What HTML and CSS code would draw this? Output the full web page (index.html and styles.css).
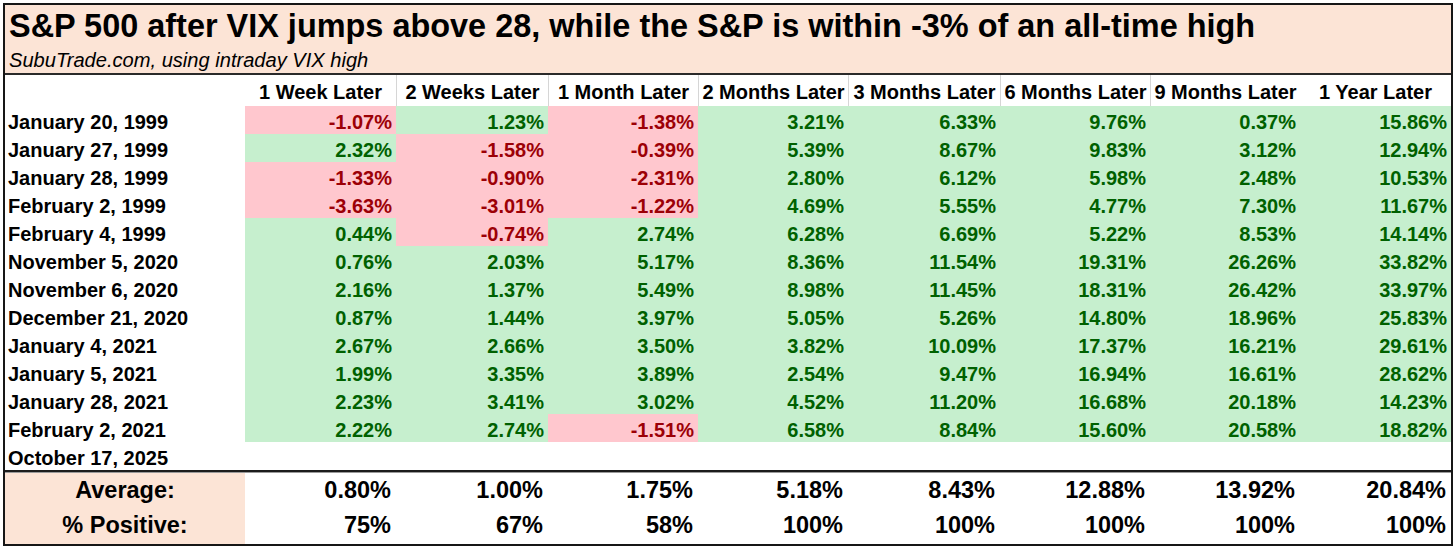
FILE: index.html
```html
<!DOCTYPE html>
<html lang="en">
<head>
<meta charset="utf-8">
<title>S&amp;P 500 after VIX jumps above 28</title>
<link rel="stylesheet" href="styles.css">
</head>
<body>
<div class="sheet">
  <div class="band">
    <div class="title">S&amp;P 500 after VIX jumps above 28, while the S&amp;P is within -3% of an all-time high</div>
    <div class="subtitle">SubuTrade.com, using intraday VIX high</div>
  </div>
  <div class="grid">
    <div class="hd"></div>
    <div class="hd">1 Week Later</div>
    <div class="hd sep">2 Weeks Later</div>
    <div class="hd sep">1 Month Later</div>
    <div class="hd sep">2 Months Later</div>
    <div class="hd sep">3 Months Later</div>
    <div class="hd sep">6 Months Later</div>
    <div class="hd sep">9 Months Later</div>
    <div class="hd">1 Year Later</div>

    <div class="lb">January 20, 1999</div>
    <div class="c n">-1.07%</div><div class="c p">1.23%</div><div class="c n">-1.38%</div><div class="c p">3.21%</div><div class="c p">6.33%</div><div class="c p">9.76%</div><div class="c p">0.37%</div><div class="c p">15.86%</div>

    <div class="lb">January 27, 1999</div>
    <div class="c p">2.32%</div><div class="c n">-1.58%</div><div class="c n">-0.39%</div><div class="c p">5.39%</div><div class="c p">8.67%</div><div class="c p">9.83%</div><div class="c p">3.12%</div><div class="c p">12.94%</div>

    <div class="lb">January 28, 1999</div>
    <div class="c n">-1.33%</div><div class="c n">-0.90%</div><div class="c n">-2.31%</div><div class="c p">2.80%</div><div class="c p">6.12%</div><div class="c p">5.98%</div><div class="c p">2.48%</div><div class="c p">10.53%</div>

    <div class="lb">February 2, 1999</div>
    <div class="c n">-3.63%</div><div class="c n">-3.01%</div><div class="c n">-1.22%</div><div class="c p">4.69%</div><div class="c p">5.55%</div><div class="c p">4.77%</div><div class="c p">7.30%</div><div class="c p">11.67%</div>

    <div class="lb">February 4, 1999</div>
    <div class="c p">0.44%</div><div class="c n">-0.74%</div><div class="c p">2.74%</div><div class="c p">6.28%</div><div class="c p">6.69%</div><div class="c p">5.22%</div><div class="c p">8.53%</div><div class="c p">14.14%</div>

    <div class="lb">November 5, 2020</div>
    <div class="c p">0.76%</div><div class="c p">2.03%</div><div class="c p">5.17%</div><div class="c p">8.36%</div><div class="c p">11.54%</div><div class="c p">19.31%</div><div class="c p">26.26%</div><div class="c p">33.82%</div>

    <div class="lb">November 6, 2020</div>
    <div class="c p">2.16%</div><div class="c p">1.37%</div><div class="c p">5.49%</div><div class="c p">8.98%</div><div class="c p">11.45%</div><div class="c p">18.31%</div><div class="c p">26.42%</div><div class="c p">33.97%</div>

    <div class="lb">December 21, 2020</div>
    <div class="c p">0.87%</div><div class="c p">1.44%</div><div class="c p">3.97%</div><div class="c p">5.05%</div><div class="c p">5.26%</div><div class="c p">14.80%</div><div class="c p">18.96%</div><div class="c p">25.83%</div>

    <div class="lb">January 4, 2021</div>
    <div class="c p">2.67%</div><div class="c p">2.66%</div><div class="c p">3.50%</div><div class="c p">3.82%</div><div class="c p">10.09%</div><div class="c p">17.37%</div><div class="c p">16.21%</div><div class="c p">29.61%</div>

    <div class="lb">January 5, 2021</div>
    <div class="c p">1.99%</div><div class="c p">3.35%</div><div class="c p">3.89%</div><div class="c p">2.54%</div><div class="c p">9.47%</div><div class="c p">16.94%</div><div class="c p">16.61%</div><div class="c p">28.62%</div>

    <div class="lb">January 28, 2021</div>
    <div class="c p">2.23%</div><div class="c p">3.41%</div><div class="c p">3.02%</div><div class="c p">4.52%</div><div class="c p">11.20%</div><div class="c p">16.68%</div><div class="c p">20.18%</div><div class="c p">14.23%</div>

    <div class="lb">February 2, 2021</div>
    <div class="c p">2.22%</div><div class="c p">2.74%</div><div class="c n">-1.51%</div><div class="c p">6.58%</div><div class="c p">8.84%</div><div class="c p">15.60%</div><div class="c p">20.58%</div><div class="c p">18.82%</div>

    <div class="lb">October 17, 2025</div>
    <div class="c"></div><div class="c"></div><div class="c"></div><div class="c"></div><div class="c"></div><div class="c"></div><div class="c"></div><div class="c"></div>

    <div class="rule"></div>

    <div class="sl">Average:</div>
    <div class="sv">0.80%</div><div class="sv">1.00%</div><div class="sv">1.75%</div><div class="sv">5.18%</div><div class="sv">8.43%</div><div class="sv">12.88%</div><div class="sv">13.92%</div><div class="sv">20.84%</div>

    <div class="sl">% Positive:</div>
    <div class="sv">75%</div><div class="sv">67%</div><div class="sv">58%</div><div class="sv">100%</div><div class="sv">100%</div><div class="sv">100%</div><div class="sv">100%</div><div class="sv">100%</div>
  </div>
</div>
</body>
</html>
```
FILE: styles.css
```css
html, body {
  margin: 0;
  padding: 0;
  background: #ffffff;
}

body {
  font-family: "Liberation Sans", Arial, sans-serif;
  color: #000;
}

.sheet {
  box-sizing: border-box;
  width: 1450px;
  margin: 3px 0 0 3px;
  border: 2px solid #161616;
  background: #fff;
}

.band {
  box-sizing: border-box;
  height: 70px;
  background: #fce4d6;
  border-bottom: 2px solid #2a2a2a;
  padding: 2px 0 0 4px;
}

.title {
  font-size: 32.45px;
  font-weight: bold;
  line-height: 38px;
  white-space: nowrap;
}

.subtitle {
  margin-top: 4px;
  font-size: 20.1px;
  font-style: italic;
  line-height: 22px;
  white-space: nowrap;
}

.grid {
  display: grid;
  grid-template-columns: 240px 151px 152px 150px 150px 152px 150px 150px 151px;
  grid-template-rows: 31px repeat(13, 28px) 3px 35px 36px;
}

.hd {
  box-sizing: border-box;
  padding-top: 3px;
  font-size: 20px;
  font-weight: bold;
  line-height: 28px;
  text-align: center;
  white-space: nowrap;
}

.hd.sep {
  border-left: 1px solid #d6d6d6;
}

.lb {
  box-sizing: border-box;
  padding: 4px 0 0 3px;
  font-size: 20px;
  font-weight: bold;
  line-height: 24px;
  white-space: nowrap;
}

.c {
  box-sizing: border-box;
  padding: 4px 4px 0 0;
  font-size: 20px;
  font-weight: bold;
  line-height: 24px;
  text-align: right;
  white-space: nowrap;
}

.c.p {
  background: #c6efce;
  color: #006100;
}

.c.n {
  background: #ffc7ce;
  color: #9c0006;
}

.rule {
  box-sizing: border-box;
  grid-column: 1 / -1;
  border-top: 2px solid #1c1c1c;
  border-bottom: 1px solid #9a9a9a;
}

.sl,
.sv {
  box-sizing: border-box;
  font-size: 23.5px;
  font-weight: bold;
  line-height: 35px;
  white-space: nowrap;
}

.sl {
  background: #fce4d6;
  text-align: center;
}

.sv {
  text-align: right;
  padding-right: 5px;
}
```
